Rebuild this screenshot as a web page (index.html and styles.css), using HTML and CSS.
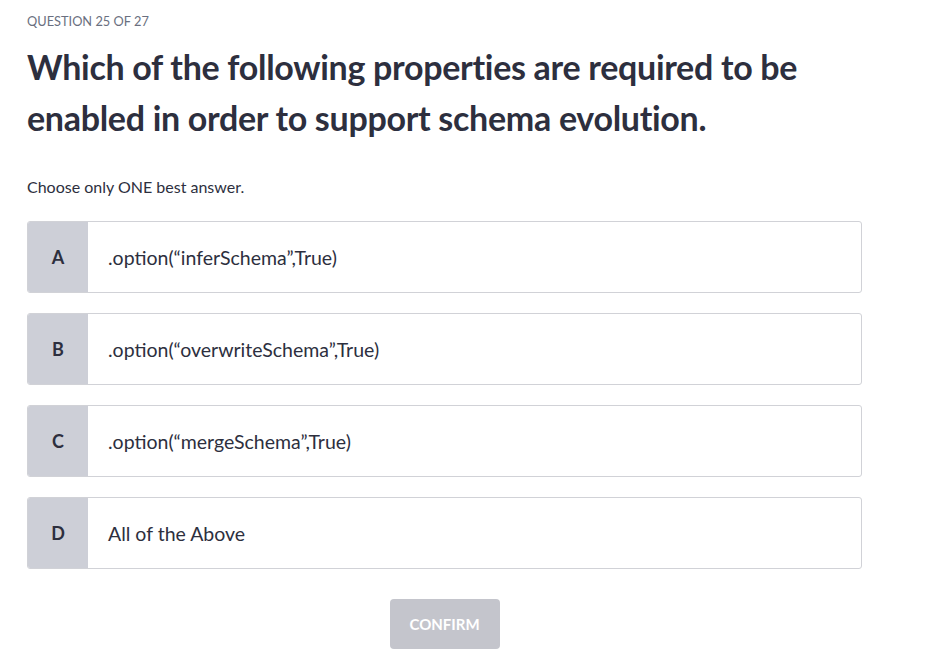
FILE: index.html
```html
<!DOCTYPE html>
<html>
<head>
<meta charset="utf-8">
<link rel="stylesheet" href="styles.css">
</head>
<body>
<main class="quiz">
  <div class="counter">QUESTION 25 OF 27</div>
  <h1 class="question">Which of the following properties are required to be enabled in order to support schema evolution.</h1>
  <p class="hint">Choose only ONE best answer.</p>
  <div class="options">
    <div class="option"><div class="letter">A</div><div class="text">.option(“inferSchema”,True)</div></div>
    <div class="option"><div class="letter">B</div><div class="text">.option(“overwriteSchema”,True)</div></div>
    <div class="option"><div class="letter">C</div><div class="text">.option(“mergeSchema”,True)</div></div>
    <div class="option"><div class="letter">D</div><div class="text">All of the Above</div></div>
  </div>
  <div class="actions"><button class="confirm">CONFIRM</button></div>
</main>
</body>
</html>
```

FILE: styles.css
```css
* { box-sizing: border-box; }
body {
  margin: 0;
  background: #fff;
  font-family: Lato, "Open Sans", sans-serif;
  color: #2d2f3e;
}
.quiz {
  width: 835px;
  margin-left: 27px;
  padding-top: 12px;
}
.counter {
  font-size: 12.8px;
  color: #6a6f80;
  line-height: 18px;
}
.question {
  margin: 11px 0 0;
  font-size: 34px;
  font-weight: 700;
  line-height: 51px;
  letter-spacing: -0.3px;
  color: #2d2f3e;
  width: 810px;
}
.hint {
  margin: 34px 0 0;
  font-size: 16px;
  line-height: 20px;
  color: #2d2f3e;
}
.options {
  margin-top: 24px;
  display: flex;
  flex-direction: column;
  gap: 20px;
}
.option {
  display: flex;
  height: 72px;
  border: 1px solid #d1d2d7;
  border-radius: 3px;
  overflow: hidden;
}
.letter {
  width: 60px;
  background: #cdcfd7;
  display: flex;
  align-items: center;
  justify-content: center;
  font-weight: 700;
  font-size: 18px;
  color: #2d2f3e;
}
.text {
  display: flex;
  align-items: center;
  padding-left: 20px;
  font-size: 19.5px;
  color: #2d2f3e;
}
.actions {
  display: flex;
  justify-content: center;
  margin-top: 30px;
}
.confirm {
  width: 110px;
  height: 50px;
  border: none;
  border-radius: 4px;
  background: #c4c5cc;
  color: #fff;
  font-family: inherit;
  font-weight: 700;
  font-size: 15px;
}
```
